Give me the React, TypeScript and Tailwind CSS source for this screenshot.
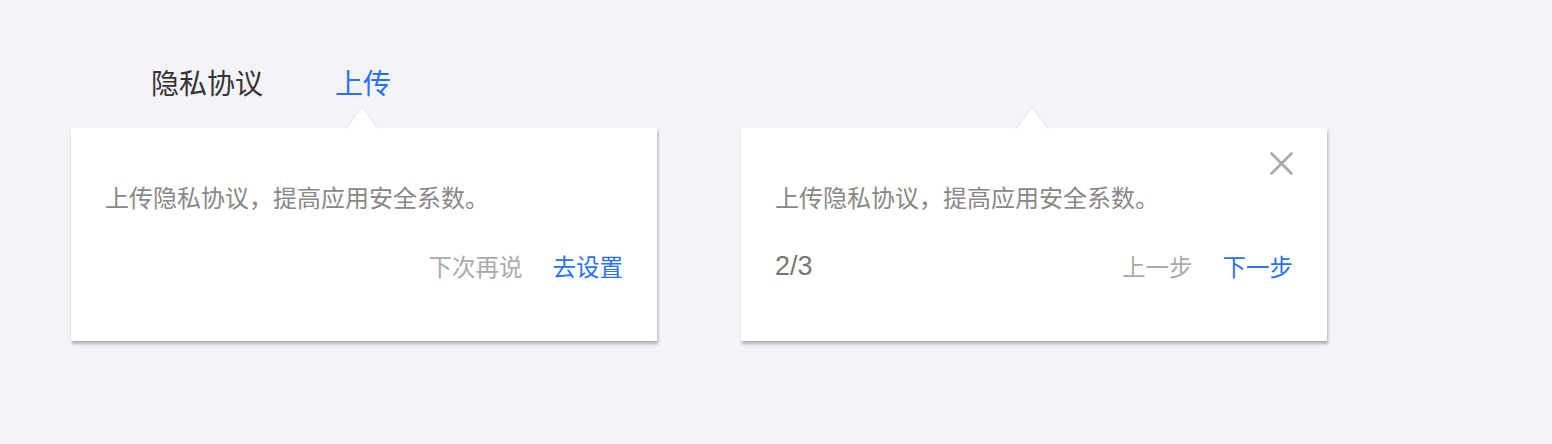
const font = "font-['PingFang_SC','Noto_Sans_CJK_SC',sans-serif]";

function Arrow() {
  return (
    <svg
      className="absolute left-[274px] top-[-22px]"
      width="34"
      height="23"
      viewBox="0 0 34 23"
    >
      <polygon points="0,23 17,0 34,23" fill="#e9e9ee" />
      <polygon points="1.5,23 17,1.8 32.5,23" fill="#ffffff" />
    </svg>
  );
}

function Card({ children, closable }: { children: React.ReactNode; closable?: boolean }) {
  return (
    <div className="relative w-[586px] h-[213px] bg-white shadow-[1px_3px_3px_rgba(0,0,0,0.28)] px-[34px] pt-[52px] pb-[58px] flex flex-col">
      <Arrow />
      {closable && (
        <button className="absolute top-[24px] right-[34px] w-[23px] h-[23px]">
          <svg width="23" height="23" viewBox="0 0 23 23">
            <path d="M1.5 1.5 L21.5 21.5 M21.5 1.5 L1.5 21.5" stroke="#a8a8a8" strokeWidth="2.6" strokeLinecap="round" />
          </svg>
        </button>
      )}
      <p className="text-[24px] leading-[34px] text-[#888888]">上传隐私协议，提高应用安全系数。</p>
      <div className="mt-[35px] h-[34px] flex items-center">{children}</div>
    </div>
  );
}

export default function App() {
  return (
    <div className={`${font} w-[1552px] h-[444px] bg-[#f4f4f8] pl-[71px] pt-[62px]`}>
      <div className="flex items-center h-[40px] pl-[80px] gap-[72px] text-[28px] leading-[40px]">
        <span className="text-[#333333]">隐私协议</span>
        <span className="text-[#2a72f5]">上传</span>
      </div>
      <div className="mt-[26px] flex gap-[84px]">
        <Card>
          <div className="ml-auto flex gap-[30px] text-[23.5px] leading-[34px]">
            <button className="text-[#aaaaaa]">下次再说</button>
            <button className="text-[#2a72f5]">去设置</button>
          </div>
        </Card>
        <Card closable>
          <span className="font-['Liberation_Sans',sans-serif] text-[27px] leading-[34px] text-[#777777]">2/3</span>
          <div className="ml-auto flex gap-[30px] text-[23.5px] leading-[34px]">
            <button className="text-[#aaaaaa]">上一步</button>
            <button className="text-[#2a72f5]">下一步</button>
          </div>
        </Card>
      </div>
    </div>
  );
}
